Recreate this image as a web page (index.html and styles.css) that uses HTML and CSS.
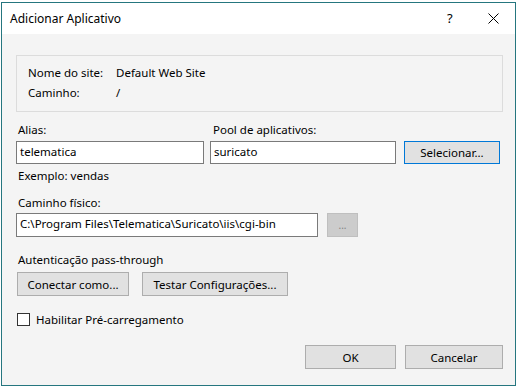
FILE: index.html
```html
<!DOCTYPE html>
<html lang="pt">
<head>
<meta charset="utf-8">
<title>Adicionar Aplicativo</title>
<link rel="stylesheet" href="styles.css">
</head>
<body>
<div class="window">
  <div class="titlebar">
    <span class="title">Adicionar Aplicativo</span>
    <span class="help">?</span>
    <span class="close"><svg width="11" height="11" viewBox="0 0 11 11"><path d="M0.5 0.5 L10.5 10.5 M10.5 0.5 L0.5 10.5" stroke="#000" stroke-width="1" fill="none"/></svg></span>
  </div>
  <div class="content">
    <div class="infobox">
      <div class="inforow"><span class="infolabel">Nome do site:</span><span>Default Web Site</span></div>
      <div class="inforow"><span class="infolabel">Caminho:</span><span>/</span></div>
    </div>
    <div class="row-alias">
      <div class="col col-alias">
        <div class="label">Alias:</div>
        <div class="input">telematica</div>
      </div>
      <div class="col col-pool">
        <div class="label">Pool de aplicativos:</div>
        <div class="input">suricato</div>
      </div>
      <div class="btn btn-default btn-select">Selecionar...</div>
    </div>
    <div class="hint">Exemplo: vendas</div>
    <div class="label label-path">Caminho físico:</div>
    <div class="row-path">
      <div class="input input-path">C:\Program Files\Telematica\Suricato\iis\cgi-bin</div>
      <div class="btn btn-disabled">...</div>
    </div>
    <div class="label label-auth">Autenticação pass-through</div>
    <div class="row-auth">
      <div class="btn btn-connect">Conectar como...</div>
      <div class="btn btn-test">Testar Configurações...</div>
    </div>
    <div class="check-row">
      <span class="checkbox"></span>
      <span>Habilitar Pré-carregamento</span>
    </div>
    <div class="row-actions">
      <div class="btn btn-ok">OK</div>
      <div class="btn btn-cancel">Cancelar</div>
    </div>
  </div>
</div>
</body>
</html>
```

FILE: styles.css
```css
* { box-sizing: border-box; }
html, body { margin: 0; padding: 0; }
body {
  background: #ffffff;
  font-family: "Noto Sans", "Open Sans", sans-serif;
  font-size: 11.5px;
  color: #000;
  width: 521px;
  height: 389px;
  overflow: hidden;
}
.window {
  margin: 2px 0 0 1px;
  width: 515px;
  height: 384px;
  border: 1px solid #25767f;
  background: #f4f4f4;
  display: flex;
  flex-direction: column;
}
.titlebar {
  height: 31px;
  background: #ffffff;
  display: flex;
  align-items: center;
  position: relative;
}
.title {
  margin-left: 8px;
  font-size: 12px;
}
.help {
  position: absolute;
  left: 445px;
  top: 6px;
  font-size: 13px;
}
.close {
  position: absolute;
  left: 486px;
  top: 10px;
  line-height: 0;
}
.content {
  padding: 21px 0 0 14px;
  display: flex;
  flex-direction: column;
}
.infobox {
  width: 487px;
  height: 57px;
  border: 1px solid #dcdcdc;
  padding: 7px 0 0 11px;
}
.inforow {
  display: flex;
  line-height: 20px;
}
.infolabel { width: 88px; }
.row-alias {
  display: flex;
  align-items: flex-end;
  margin-top: 8px;
}
.col { display: flex; flex-direction: column; }
.col-alias { width: 188px; }
.col-pool { width: 186px; margin-left: 6px; }
.label { line-height: 20px; padding-left: 2px; }
.col-pool .label { padding-left: 3px; }
.input {
  height: 23px;
  border: 1px solid #7a7a7a;
  background: #ffffff;
  padding-left: 3px;
  line-height: 20px;
  margin-top: 1px;
  white-space: nowrap;
  overflow: hidden;
}
.btn {
  height: 24px;
  border: 1px solid #adadad;
  background: #e1e1e1;
  display: flex;
  align-items: center;
  justify-content: center;
  white-space: nowrap;
}
.btn-default { border-color: #0078d7; }
.btn-select { width: 96px; height: 23px; margin-left: 8px; }
.hint { line-height: 20px; padding-left: 2px; margin-top: 2px; }
.label-path { margin-top: 7px; }
.row-path { display: flex; margin-top: 0; }
.input-path { width: 302px; height: 24px; margin-top: 0; }
.btn-disabled {
  width: 31px;
  margin-left: 9px;
  background: #cccccc;
  border-color: #bfbfbf;
  color: #838383;
  font-size: 10px;
}
.label-auth { margin-top: 13px; }
.row-auth { display: flex; margin-top: 2px; }
.btn-connect { width: 112px; margin-left: 1px; }
.btn-test { width: 146px; margin-left: 13px; }
.check-row {
  display: flex;
  align-items: center;
  margin-top: 17px;
  margin-left: 1px;
  line-height: 13px;
}
.checkbox {
  width: 13px;
  height: 13px;
  border: 1px solid #333333;
  background: #ffffff;
  margin-right: 6px;
}
.row-actions {
  display: flex;
  justify-content: flex-end;
  margin-top: 19px;
  padding-right: 12px;
}
.btn-ok { width: 91px; }
.btn-cancel { width: 98px; margin-left: 9px; }
```
